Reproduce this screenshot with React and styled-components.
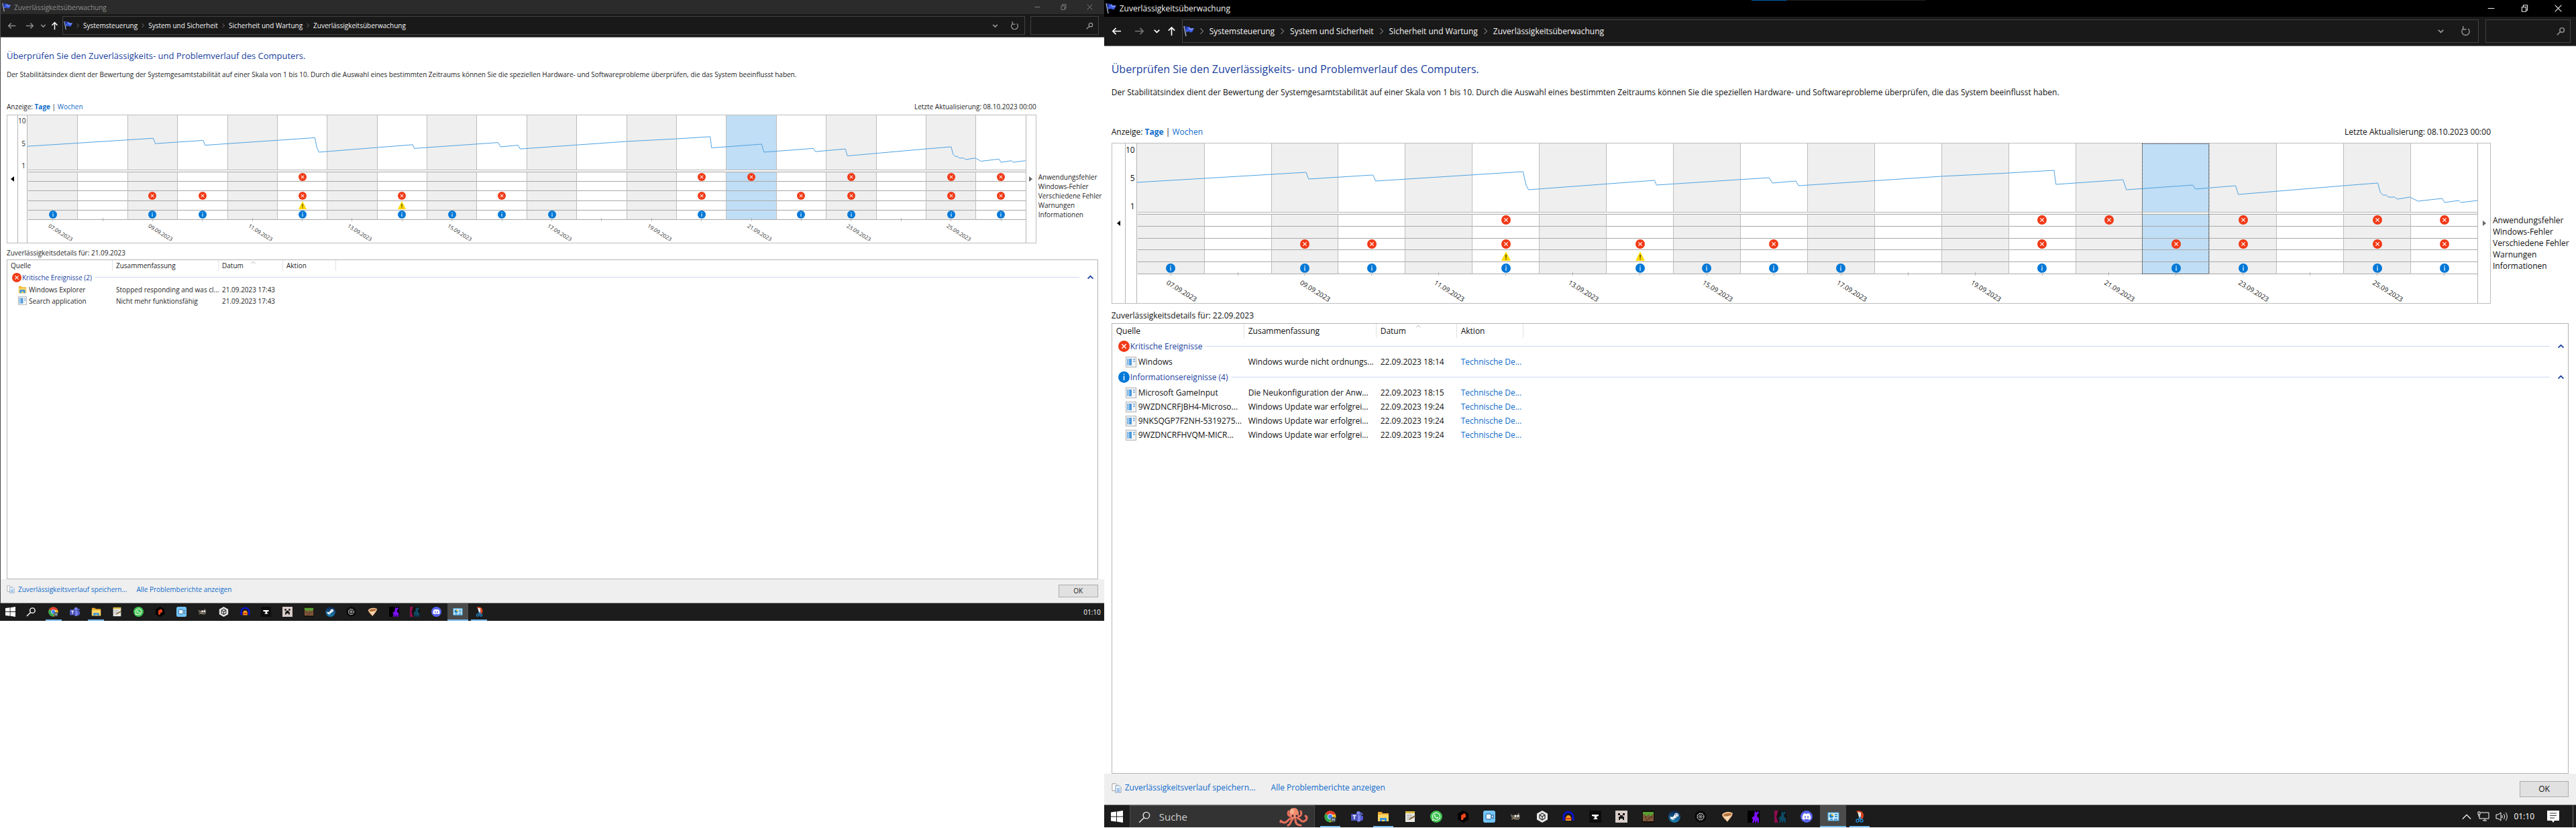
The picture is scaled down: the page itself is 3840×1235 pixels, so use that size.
import React from "react";
import styled, { createGlobalStyle, css, ThemeProvider } from "styled-components";
import { FaDiscord, FaSteamSymbol, FaWhatsapp } from "react-icons/fa";

const GlobalStyle = createGlobalStyle`
  * {
    box-sizing: border-box;
  }
  body {
    margin: 0;
    background: #fff;
    font-family: "Open Sans", "Noto Sans", sans-serif;
  }
  button, input {
    font: inherit;
    color: inherit;
    margin: 0;
    padding: 0;
    border: 0;
    background: none;
  }
  a {
    text-decoration: none;
  }
  svg {
    display: block;
    flex: none;
  }
`;

// The two monitors have different pixel densities
const small = {
  text: "#262626",
  titleColor: "#8c8c8c",
  titleBg: "#2b2b2b",
  navMuted: "#8c8c8c",
  navStrong: "#8c8c8c",
  font: 10,
  line: 14,
  headingFont: 13,
  headingLine: 18,
  titleHeight: 21,
  controlWidth: 39,
  controlIcon: 9,
  appIcon: 14,
  navHeight: 35,
  navPadY: 3,
  navWidths: [30, 24, 16, 18],
  navIcon: 13,
  crumbGap: 3,
  chevron: 8,
  searchWidth: 102,
  navGap: 8,
  toolWidth: 29,
  side: 9,
  top: 18,
  gapHeading: 12,
  gapIntro: 34,
  gapChart: 5,
  gapDetails: 7,
  gapList: 3,
  legend: 92,
  legendTop: 86,
  legendLine: 14,
  scroller: 15,
  axis: 15,
  plot: 82,
  bands: 72,
  dates: 34,
  dateFont: 8,
  dateTop: 4,
  eventIcon: 12,
  cols: [157, 158, 96, 79],
  cellPad: 5,
  head: 16,
  group: 19,
  row: 17,
  groupIcon: 14,
  itemPad: 17,
  groupPad: 7,
  footer: 36,
  okWidth: 59,
  okHeight: 19,
  footerGap: 14,
  taskbar: 26,
  start: 31,
  apps: 666,
  appsGap: 2,
  taskIcon: 15,
  underline: 24,
};

const large = {
  text: "#111",
  titleColor: "#f2f2f2",
  titleBg: "#000",
  navMuted: "#777",
  navStrong: "#fff",
  font: 12,
  line: 18,
  headingFont: 16,
  headingLine: 22,
  titleHeight: 25,
  controlWidth: 50,
  controlIcon: 11,
  appIcon: 17,
  navHeight: 44,
  navPadY: 4,
  navWidths: [36, 32, 20, 24],
  navIcon: 15,
  crumbGap: 5,
  chevron: 11,
  searchWidth: 127,
  navGap: 10,
  toolWidth: 37,
  side: 11,
  top: 23,
  gapHeading: 15,
  gapIntro: 41,
  gapChart: 7,
  gapDetails: 9,
  gapList: 2,
  legend: 116,
  legendTop: 107,
  legendLine: 17,
  scroller: 19,
  axis: 18,
  plot: 103,
  bands: 90,
  dates: 43,
  dateFont: 10,
  dateTop: 6,
  eventIcon: 14,
  cols: [197, 197, 120, 99],
  cellPad: 6,
  head: 21,
  group: 25,
  row: 21,
  groupIcon: 17,
  itemPad: 21,
  groupPad: 9,
  footer: 47,
  okWidth: 73,
  okHeight: 24,
  footerGap: 23,
  taskbar: 33,
  start: 38,
  apps: 828,
  appsGap: 4,
  taskIcon: 18,
  underline: 30,
};

const px = (key) => (p) => `${p.theme[key]}px`;

/* ---------- layout ---------- */

const Screens = styled.div`
  display: grid;
  grid-template-columns: 3fr 4fr;
  align-items: start;
`;

const Desktop = styled.section`
  display: flex;
  flex-direction: column;
  min-width: 0;
  aspect-ratio: 16 / 9;
  color: ${(p) => p.theme.text};
  font-size: ${px("font")};
  line-height: ${px("line")};
  white-space: nowrap;
`;

const Window = styled.main`
  flex: 1;
  min-height: 0;
  display: flex;
  flex-direction: column;
  background: #fff;
  border-left: ${(p) => (p.$edge ? "1px solid #4a4a4a" : "0")};
`;

const TitleBar = styled.header`
  position: relative;
  display: flex;
  align-items: center;
  height: ${px("titleHeight")};
  padding: 0 2px;
  gap: 4px;
  background: ${(p) => p.theme.titleBg};
  color: ${(p) => p.theme.titleColor};
`;

const Title = styled.span`
  flex: 1;
`;

const Progress = styled.div`
  position: absolute;
  top: 0;
  left: 44%;
  width: 259px;
  height: 1px;
  background: #1e1e1e;
  &::before {
    content: "";
    display: block;
    width: 52px;
    height: 1px;
    background: #0063b1;
  }
`;

const Controls = styled.div`
  display: flex;
  align-self: stretch;
`;

const IconButton = styled.button`
  display: flex;
  align-items: center;
  justify-content: center;
  width: ${(p) => p.$width}px;
  color: ${(p) => p.$color || "inherit"};
`;

const NavBar = styled.nav`
  display: flex;
  height: ${px("navHeight")};
  padding: ${px("navPadY")} 8px ${px("navPadY")} 1px;
  background: #191919;
  border-bottom: 1px solid #777;
  color: #f2f2f2;
`;

const Address = styled.div`
  flex: 1;
  display: flex;
  align-items: center;
  gap: ${px("crumbGap")};
  margin: 0 ${px("navGap")} 0 3px;
  padding-left: 1px;
  border: 1px solid #424242;
`;

const Crumb = styled.a`
  color: #f5f5f5;
  padding: 0 1px;
`;

const AddressTools = styled.div`
  display: flex;
  align-self: stretch;
  margin-left: auto;
`;

const SearchField = styled.label`
  display: flex;
  align-items: center;
  width: ${px("searchWidth")};
  padding-right: 7px;
  border: 1px solid #424242;
  color: #999;
  input {
    flex: 1;
    min-width: 0;
    outline: 0;
  }
`;

const Content = styled.div`
  flex: 1;
  min-height: 0;
  display: flex;
  flex-direction: column;
  padding: ${px("top")} ${px("side")} 0;
`;

const Heading = styled.h1`
  margin: 0 0 ${px("gapHeading")};
  color: #1a3f9f;
  font-size: ${px("headingFont")};
  line-height: ${px("headingLine")};
  font-weight: 400;
`;

const Intro = styled.p`
  margin: 0 0 ${px("gapIntro")};
`;

const ViewBar = styled.div`
  display: flex;
  justify-content: space-between;
  padding-right: ${px("legend")};
  margin-bottom: ${px("gapChart")};
`;

const TextLink = styled.a`
  color: #0f6ccb;
  font-weight: ${(p) => (p.$active ? 700 : 400)};
`;

/* ---------- chart ---------- */

const ChartRow = styled.div`
  display: flex;
`;

const ChartBox = styled.div`
  flex: 1;
  display: flex;
  border: 1px solid #bdbdbd;
`;

const Scroller = styled.button`
  width: ${px("scroller")};
  display: flex;
  align-items: center;
  justify-content: center;
  color: ${(p) => (p.$next ? "#666" : "#000")};
  border-left: ${(p) => (p.$next ? "1px solid #b5b5b5" : "0")};
`;

const Axis = styled.div`
  width: ${px("axis")};
  border: solid #b5b5b5;
  border-width: 0 1px;
`;

const AxisScale = styled.div`
  height: ${px("plot")};
  padding: 1px 2px 0 0;
  display: flex;
  flex-direction: column;
  justify-content: space-between;
  text-align: right;
`;

const Days = styled.div`
  position: relative;
  flex: 1;
  display: grid;
  grid-template-columns: repeat(20, 1fr);
`;

const DayButton = styled.button`
  display: block;
  width: 100%;
  text-align: inherit;
  outline: ${(p) => (p.$focused ? "1px dotted #333" : "0")};
  outline-offset: -1px;
`;

const dayFill = css`
  background: ${(p) => (p.$selected ? "#c0def5" : p.$odd ? "#fff" : "#efefef")};
  border-left: 1px solid ${(p) => (p.$first ? "transparent" : "#bdbdbd")};
`;

const PlotCell = styled.div`
  height: ${px("plot")};
  border-bottom: 1px solid #b5b5b5;
  ${dayFill}
`;

const Bands = styled.div`
  display: grid;
  grid-template-rows: repeat(5, 1fr);
  height: ${px("bands")};
  margin-top: 2px;
  border-top: 1px solid #a3a3a3;
  ${dayFill}
`;

const Band = styled.div`
  display: flex;
  align-items: center;
  justify-content: center;
  border-bottom: 1px solid #a9a9a9;
`;

const DateCell = styled.div`
  position: relative;
  height: ${px("dates")};
  padding: ${px("dateTop")} 0 0 calc(50% - 5px);
  font-size: ${px("dateFont")};
  line-height: ${px("dateFont")};
  &::before {
    content: "";
    position: absolute;
    left: 50%;
    top: -3px;
    height: 5px;
    border-left: 1px solid #b5b5b5;
  }
  span {
    display: inline-block;
    transform: rotate(32deg);
    transform-origin: 0 50%;
  }
`;

const LineSvg = styled.svg`
  position: absolute;
  left: 0;
  top: 0;
  width: 100%;
  height: ${px("plot")};
  pointer-events: none;
`;

const Legend = styled.ul`
  width: ${px("legend")};
  margin: ${px("legendTop")} 0 0;
  padding: 0 0 0 3px;
  list-style: none;
  line-height: ${px("legendLine")};
`;

/* ---------- details list ---------- */

const DetailsTitle = styled.h2`
  margin: ${px("gapDetails")} 0 ${px("gapList")};
  font: inherit;
`;

const ListBox = styled.div`
  flex: 1;
  min-height: 0;
  border: 1px solid #b5b5b5;
`;

const Table = styled.table`
  width: 100%;
  table-layout: fixed;
  border-collapse: separate;
  border-spacing: 0;
  th,
  td {
    padding: 0 0 0 ${px("cellPad")};
    font-weight: 400;
    text-align: left;
    overflow: hidden;
  }
  td {
    height: ${px("row")};
  }
`;

const HeadCell = styled.th`
  position: relative;
  height: ${px("head")};
  border-right: ${(p) => (p.$last ? "0" : "1px solid #e2e2e2")};
  svg {
    position: absolute;
    left: 50%;
    top: 0;
  }
`;

const GroupHead = styled.div`
  display: flex;
  align-items: center;
  gap: 1px;
  height: ${px("group")};
  padding: 0 6px 0 ${(p) => p.theme.groupPad - p.theme.cellPad}px;
  color: #1a3f9f;
  hr {
    flex: 1;
    height: 1px;
    margin: 0 11px 0 4px;
    border: 0;
    background: #cdd7ee;
  }
`;

const Source = styled.div`
  display: flex;
  align-items: center;
  gap: 3px;
  padding-left: ${(p) => p.theme.itemPad - p.theme.cellPad - 1}px;
`;

const Footer = styled.footer`
  display: flex;
  align-items: center;
  gap: ${px("footerGap")};
  height: ${px("footer")};
  padding: 0 ${px("side")};
  background: #efefef;
  border-bottom: 1px solid #8a8a8a;
  a {
    display: flex;
    align-items: center;
    gap: 5px;
    margin-bottom: 4px;
  }
`;

const OkButton = styled.button`
  width: ${px("okWidth")};
  height: ${px("okHeight")};
  margin-left: auto;
  border: 1px solid #adadad;
  background: #e1e1e1;
`;

/* ---------- taskbar ---------- */

const Taskbar = styled.footer`
  display: flex;
  height: ${px("taskbar")};
  background: #1c1c1c;
  color: #fff;
`;

const TaskSearch = styled.label`
  display: flex;
  align-items: center;
  width: 276px;
  padding: 0 7px 0 12px;
  gap: 12px;
  border: 1px solid #4a4a4a;
  border-bottom: 0;
  background: #333;
  input {
    flex: 1;
    min-width: 0;
    outline: 0;
    font-size: 15px;
  }
  input::placeholder {
    color: #cfcfcf;
    opacity: 1;
  }
`;

const Apps = styled.div`
  display: grid;
  grid-template-columns: repeat(21, 1fr);
  width: ${px("apps")};
  margin-left: ${px("appsGap")};
`;

const TaskButton = styled.button`
  position: relative;
  display: flex;
  align-items: center;
  justify-content: center;
  background: ${(p) => (p.$active ? "#4b4b4b" : "none")};
  &::after {
    content: "";
    display: ${(p) => (p.$open || p.$active ? "block" : "none")};
    position: absolute;
    bottom: 0;
    width: ${(p) => (p.$active ? "100%" : `${p.theme.underline}px`)};
    height: 2px;
    background: #76b9ed;
  }
`;

const Tray = styled.div`
  display: flex;
  align-items: center;
  gap: 9px;
  margin-left: auto;
  padding-right: ${(p) => (p.$full ? 4 : 5)}px;
`;

const TrayEnd = styled.div`
  align-self: stretch;
  display: flex;
  align-items: center;
  padding: 0 20px 0 10px;
  border-right: 1px solid #6b6b6b;
`;

/* ---------- icons ---------- */

const Flag = ({ size }) => (
  <svg width={size} height={size} viewBox="0 0 17 17">
    <path d="M1 1l3 15" stroke="#aab4c4" strokeWidth="1.4" />
    <path d="M2 2c3-2 4 1 7 0l1 2c2 1 4 0 6 0l-3 6c-2 1-4-1-5-1-2 0-3 1-4 1z" fill="#3c5be0" />
    <path d="M9 2l1 2c2 1 4 0 6 0l-3 3c-2 0-4-1-5-2z" fill="#7b97ff" />
    <path d="M2 2c2-1 3 0 4 0L5 6 3 7z" fill="#20339a" />
  </svg>
);

const paths = {
  back: "M15 8H2M7 3L2 8l5 5",
  forward: "M1 8h13M9 3l5 5-5 5",
  down: "M4 6l4 4 4-4",
  up: "M8 15V2M3 7l5-5 5 5",
  right: "M5 2l6 6-6 6",
  caret: "M1 12l7-7 7 7",
  minimize: "M1 8h14",
  close: "M1 1l14 14M15 1L1 15",
  restore: "M2 5h9v10H2zM5 5V1h9v11h-3",
  refresh: "M4 4a6 6 0 1 0 8 0M4 0v5h5",
  search: "M14 6a4 4 0 1 1-8 0 4 4 0 0 1 8 0zM7 9l-6 6",
};

const Stroke = ({ name, size, width = 1.5, color }) => (
  <svg width={size} height={size} viewBox="0 0 16 16" fill="none" stroke={color || "currentColor"} strokeWidth={width}>
    <path d={paths[name]} />
  </svg>
);

const ErrorIcon = ({ size }) => (
  <svg width={size} height={size} viewBox="0 0 16 16">
    <circle cx="8" cy="8" r="8" fill="#f03a17" />
    <path d="M5 5l6 6M11 5l-6 6" stroke="#fff" strokeWidth="1.4" />
  </svg>
);

const InfoIcon = ({ size }) => (
  <svg width={size} height={size} viewBox="0 0 16 16">
    <circle cx="8" cy="8" r="8" fill="#0078d7" />
    <path d="M8 3.4v1.6M8 6.4v6" stroke="#fff" strokeWidth="1.4" />
  </svg>
);

const WarningIcon = ({ size }) => (
  <svg width={size} height={size} viewBox="0 0 16 16">
    <path d="M8 0l8 16H0z" fill="#ffda00" />
    <path d="M8 5.5v5.5M8 12.4v1.6" stroke="#222" strokeWidth="1.4" />
  </svg>
);

const eventIcons = { error: ErrorIcon, info: InfoIcon, warning: WarningIcon };

const ProgramIcon = ({ size }) => (
  <svg width={size} height={size} viewBox="0 0 16 16">
    <rect x="0.5" y="0.5" width="15" height="15" fill="#f4f4f4" stroke="#b0b0b0" />
    <rect x="2" y="3" width="7" height="10" fill="#4a98dc" />
    <path d="M4 3v10" stroke="#9cc9ee" strokeWidth="3" />
    <path d="M11 4h3M11 7h3" stroke="#6aa6dc" strokeWidth="1.5" />
  </svg>
);

const FolderIcon = ({ size }) => (
  <svg width={size} height={size} viewBox="0 0 16 16">
    <path d="M1 2h5l1 2h8v11H1z" fill="#f0b93a" />
    <path d="M1 6h14v9H1z" fill="#ffd766" />
    <path d="M3 15V9h10v6h-3v-3H6v3z" fill="#3a93dd" />
  </svg>
);

const CopyIcon = ({ size }) => (
  <svg width={size} height={size} viewBox="0 0 16 16">
    <path d="M1 1h6l2 2v9H1z" fill="#fff" stroke="#999" />
    <path d="M6 4h6l3 3v8H6z" fill="#eaf3fc" stroke="#8a9db5" />
    <path d="M8 9h5M8 11h5M8 13h5" stroke="#5d9bdc" />
  </svg>
);

const Pic = ({ size, children }) => (
  <svg width={size} height={size} viewBox="0 0 18 18">
    {children}
  </svg>
);

const Round = styled.span`
  display: flex;
  align-items: center;
  justify-content: center;
  width: ${px("taskIcon")};
  height: ${px("taskIcon")};
  border-radius: 50%;
  background: ${(p) => p.$bg};
  font-size: ${(p) => p.theme.taskIcon - 4}px;
  color: #fff;
`;

const taskApps = [
  {
    name: "Chrome",
    open: true,
    draw: (
      <>
        <circle cx="9" cy="9" r="8.5" fill="#fbc116" />
        <path d="M9 9L1.6 4.8A8.5 8.5 0 0 1 16.4 4.8L17 6H9z" fill="#e33b2e" />
        <path d="M9 9L1.6 4.8A8.5 8.5 0 0 0 8 17.4L12 10z" fill="#2da94f" />
        <circle cx="9" cy="9" r="4" fill="#fff" />
        <circle cx="9" cy="9" r="3.2" fill="#4285f4" />
        <circle cx="13.5" cy="13.5" r="4" fill="#47545c" />
        <path d="M12 11.5v4M15 11.5v4M12 13.5h3" stroke="#b8c7cf" />
      </>
    ),
  },
  {
    name: "Teams",
    draw: (
      <>
        <circle cx="11" cy="4" r="3" fill="#7b83eb" />
        <circle cx="15.5" cy="5" r="2" fill="#5059c9" />
        <path d="M9 7h6v7a4 4 0 0 1-6 2z" fill="#7b83eb" />
        <path d="M14 8h4v5a3 3 0 0 1-4 2z" fill="#5059c9" />
        <rect x="0" y="5" width="10" height="10" rx="1" fill="#4b53bc" />
        <path d="M2.5 7.5h5M5 7.5V13" stroke="#fff" strokeWidth="1.4" />
      </>
    ),
  },
  {
    name: "Explorer",
    open: true,
    draw: (
      <>
        <path d="M1 2h6l1 2h9v12H1z" fill="#e8a92c" />
        <path d="M1 6h16v10H1z" fill="#ffd766" />
        <path d="M4 16v-5h10v5h-3v-2H7v2z" fill="#3a93dd" />
      </>
    ),
  },
  {
    name: "Editor",
    draw: (
      <>
        <path d="M2 2h14v15H2z" fill="#e9e9e4" />
        <path d="M2 1h14v3H2z" fill="#d9b93c" />
        <path d="M4 7h8M4 10h8M4 13h6" stroke="#9a9a9a" />
        <path d="M16 7l-8 5-1 2 3-1 7-4z" fill="#8a6a40" />
      </>
    ),
  },
  { name: "WhatsApp", round: "#3fc351", glyph: <FaWhatsapp /> },
  {
    name: "Recorder",
    draw: (
      <>
        <path d="M9 0l8 4.5v9L9 18l-8-4.5v-9z" fill="#000" />
        <path d="M6 14V7l5-3 2 2v4l-3 1-1 3z" fill="#f4431c" />
      </>
    ),
  },
  {
    name: "Kamera",
    draw: (
      <>
        <rect x="0" y="0" width="18" height="18" rx="3" fill="#74c5fb" />
        <rect x="4" y="5" width="8" height="8" rx="2" fill="#e4f4ff" stroke="#1d5c92" />
        <path d="M12 8l3-2v6l-3-2z" fill="#e4f4ff" stroke="#1d5c92" />
      </>
    ),
  },
  {
    name: "GIMP",
    draw: (
      <>
        <path d="M2 5l3 2c3-1 5 0 7-1l2-3 2 5-1 5c-3 2-7 1-9-1C3 11 2 9 2 5z" fill="#6d675c" />
        <circle cx="9" cy="8" r="1.5" fill="#fff" />
        <circle cx="13" cy="8" r="1.5" fill="#fff" />
        <path d="M3 13l6-2" stroke="#c4a478" />
      </>
    ),
  },
  {
    name: "Unity Hub",
    draw: (
      <>
        <path d="M9 0l8 4.5v9L9 18l-8-4.5v-9z" fill="#e8e8e8" />
        <path d="M9 4l4 2.5v5L9 14l-4-2.5v-5zM9 9v5M9 9L5 6.500M9 9l4-2.5" fill="none" stroke="#333" strokeWidth="1.3" />
      </>
    ),
  },
  {
    name: "Audacity",
    draw: (
      <>
        <path d="M2 15V9a7 7 0 0 1 14 0v6" fill="none" stroke="#0a12c8" strokeWidth="3" />
        <path d="M5 12a4 5 0 0 1 8 0v3H5z" fill="#f7a01c" />
        <path d="M4 12h10" stroke="#d3311f" strokeWidth="2" />
      </>
    ),
  },
  {
    name: "Anvil",
    draw: (
      <>
        <rect width="18" height="18" fill="#0c0c0c" />
        <path d="M4 6h10v2l-3 1v2l2 2H6l2-2V9L4 8z" fill="#fff" />
      </>
    ),
  },
  {
    name: "Launcher",
    draw: (
      <>
        <rect width="18" height="18" fill="#d9cdc9" />
        <path d="M4 4h3v3H4zM11 4h3v3h-3zM7 7h4v2h2v5h-2v-2H7v2H5V9h2z" fill="#161616" />
      </>
    ),
  },
  {
    name: "Minecraft",
    draw: (
      <>
        <rect width="18" height="18" fill="#120d08" />
        <path d="M1 2h16v14H1z" fill="#80573a" />
        <path d="M1 2h16v4h-3v2h-3V6H8v2H5V6H1z" fill="#56a032" />
        <path d="M4 10h2M9 12h2M13 10h2M6 14h2M11 9h1" stroke="#4d3322" strokeWidth="2" />
      </>
    ),
  },
  { name: "Steam", round: "linear-gradient(#10234f, #1784b8)", glyph: <FaSteamSymbol /> },
  {
    name: "Wheel",
    draw: (
      <>
        <circle cx="9" cy="9" r="8.5" fill="#050505" />
        <circle cx="9" cy="9" r="5" fill="none" stroke="#bbb" strokeWidth="1.3" strokeDasharray="3 1" />
        <path d="M9 4v10M4 9h10M6 6l6 6M12 6l-6 6" stroke="#999" />
      </>
    ),
  },
  {
    name: "Shell",
    draw: (
      <>
        <path d="M1 6c3-5 13-5 16-2-1 6-6 9-8 13C6 13 2 11 1 6z" fill="#f4c391" />
        <path d="M3 6c4-2 9-3 13-1-3 3-8 4-12 3z" fill="#b0703d" />
        <path d="M6 11l6-2M8 14l3-2" stroke="#fff" />
      </>
    ),
  },
  {
    name: "Wolf",
    draw: (
      <>
        <rect width="18" height="18" fill="#000" />
        <path d="M11 0l2 3 3-2 1 2-3 4 1 3 2 1v7h-2l-1-4-1 4h-2v-4l-2 4H7l1-5-2-2 4-3z" fill="#7a10f5" />
      </>
    ),
  },
  {
    name: "Wolf 2",
    draw: (
      <>
        <rect width="18" height="18" fill="#111" />
        <path d="M0 0h6L3 9l3 9H0z" fill="#8a0e4c" />
        <path d="M11 0l2 3 3-2 1 2-3 4 1 3 2 1v7h-2l-1-4-1 4h-2v-4l-2 4H7l1-5-2-2 4-3z" fill="#0e4a63" />
      </>
    ),
  },
  { name: "Discord", round: "#5865f2", glyph: <FaDiscord /> },
  {
    name: "Systemsteuerung",
    active: true,
    draw: (
      <>
        <rect x="1" y="3" width="16" height="12" fill="#d2ecfa" stroke="#3aa0dc" />
        <circle cx="6" cy="8" r="3" fill="#1583cc" />
        <path d="M6 8V5a3 3 0 0 1 3 3z" fill="#f4b52b" />
        <path d="M11 6h4M11 9h4M4 13h4M10 13h5" stroke="#1583cc" strokeWidth="1.5" />
      </>
    ),
  },
  {
    name: "Snipping Tool",
    open: true,
    draw: (
      <>
        <path d="M4 1c6-2 11 1 11 6s-2 6-5 6l1-5z" fill="#d9431e" />
        <path d="M6 2l5 1v7l-2 3z" fill="#e8e8e8" />
        <circle cx="6" cy="15" r="2" fill="none" stroke="#2386d4" strokeWidth="1.5" />
        <circle cx="12" cy="15" r="2" fill="none" stroke="#2386d4" strokeWidth="1.5" />
        <path d="M7 13l3-3 1 3" stroke="#2386d4" strokeWidth="1.5" fill="none" />
      </>
    ),
  },
];

const Octopus = () => (
  <svg width="46" height="29" viewBox="0 0 46 29">
    <g fill="none" stroke="#e8705c" strokeWidth="3" strokeLinecap="round">
      <path d="M20 16C12 18 13 24 8 23S3 18 3 22" />
      <path d="M21 18c-4 2-2 8-7 9" />
      <path d="M25 18c0 6 3 9 8 9" />
      <path d="M28 16c6 2 5 7 10 5s5-7 2-8" />
      <path d="M28 13c5 2 7-3 5-7" />
      <path d="M18 13c-4 0-5-4-3-7" />
    </g>
    <ellipse cx="23" cy="9" rx="7" ry="8" fill="#f08a6c" />
    <ellipse cx="20" cy="6" rx="3" ry="4" fill="#f9b08c" />
    <circle cx="21" cy="13" r="1.5" fill="#2b1a3a" />
    <circle cx="27" cy="13" r="1.5" fill="#2b1a3a" />
  </svg>
);

/* ---------- data ---------- */

const bands = [
  { label: "Anwendungsfehler", icon: "error", days: [5, 13, 14, 16, 18, 19] },
  { label: "Windows-Fehler", icon: "error", days: [] },
  { label: "Verschiedene Fehler", icon: "error", days: [2, 3, 5, 7, 9, 13, 15, 16, 18, 19] },
  { label: "Warnungen", icon: "warning", days: [5, 7] },
  { label: "Informationen", icon: "info", days: [0, 2, 3, 5, 7, 8, 9, 10, 13, 15, 16, 18, 19] },
];

const days = Array.from({ length: 20 }, (_, i) => `${String(i + 7).padStart(2, "0")}.09.2023`);

const stability =
  "0,58 252,43 256,53 352,47 356,56 576,42 580,61 584,69 772,55 775,62 943,51 948,59 983,56 987,63 " +
  "1200,49 1301,44 1368,40 1371,61 1471,54 1476,69 1575,62 1579,68 1639,63 1643,76 1800,63 1851,59 " +
  "1855,73 1859,77 1864,77 1867,80 1876,80 1880,83 1899,80 1911,86 1947,82 1951,88 1972,85 1975,88 2000,85";

const leftGroups = [
  {
    title: "Kritische Ereignisse (2)",
    icon: "error",
    items: [
      { folder: true, source: "Windows Explorer", summary: "Stopped responding and was cl...", date: "21.09.2023 17:43" },
      { source: "Search application", summary: "Nicht mehr funktionsfähig", date: "21.09.2023 17:43" },
    ],
  },
];

const details = "Technische De...";
const rightGroups = [
  {
    title: "Kritische Ereignisse",
    icon: "error",
    items: [
      { source: "Windows", summary: "Windows wurde nicht ordnungs...", date: "22.09.2023 18:14", action: details },
    ],
  },
  {
    title: "Informationsereignisse (4)",
    icon: "info",
    items: [
      { source: "Microsoft GameInput", summary: "Die Neukonfiguration der Anw...", date: "22.09.2023 18:15", action: details },
      { source: "9WZDNCRFJBH4-Microso...", summary: "Windows Update war erfolgrei...", date: "22.09.2023 19:24", action: details },
      { source: "9NKSQGP7F2NH-5319275...", summary: "Windows Update war erfolgrei...", date: "22.09.2023 19:24", action: details },
      { source: "9WZDNCRFHVQM-MICR...", summary: "Windows Update war erfolgrei...", date: "22.09.2023 19:24", action: details },
    ],
  },
];

const crumbs = ["Systemsteuerung", "System und Sicherheit", "Sicherheit und Wartung", "Zuverlässigkeitsüberwachung"];

/* ---------- components ---------- */

const Chrome = ({ t, focused }) => (
  <>
    <TitleBar>
      {focused && <Progress />}
      <Flag size={t.appIcon} />
      <Title>Zuverlässigkeitsüberwachung</Title>
      <Controls>
        {["minimize", "restore", "close"].map((name) => (
          <IconButton key={name} aria-label={name} $width={t.controlWidth}>
            <Stroke name={name} size={t.controlIcon} />
          </IconButton>
        ))}
      </Controls>
    </TitleBar>
    <NavBar>
      {["back", "forward", "down", "up"].map((name, i) => (
        <IconButton
          key={name}
          aria-label={name}
          $width={t.navWidths[i]}
          $color={name === "up" ? "#fff" : name === "forward" ? t.navMuted : t.navStrong}
        >
          <Stroke name={name} size={t.navIcon} width={1.8} />
        </IconButton>
      ))}
      <Address>
        <Flag size={t.appIcon} />
        {crumbs.map((crumb) => (
          <React.Fragment key={crumb}>
            <Stroke name="right" size={t.chevron} color="#8a8a8a" />
            <Crumb href="#">{crumb}</Crumb>
          </React.Fragment>
        ))}
        <AddressTools>
          <IconButton aria-label="Verlauf" $width={t.toolWidth} $color="#999">
            <Stroke name="down" size={t.navIcon} width={1.8} />
          </IconButton>
          <IconButton aria-label="Aktualisieren" $width={t.toolWidth} $color="#999">
            <Stroke name="refresh" size={t.navIcon} />
          </IconButton>
        </AddressTools>
      </Address>
      <SearchField>
        <input type="text" aria-label="Suchen" />
        <Stroke name="search" size={t.controlIcon + 2} width={1.8} />
      </SearchField>
    </NavBar>
  </>
);

const Arrow = ({ next }) => (
  <svg width="5" height="8" viewBox="0 0 5 8" fill="currentColor">
    <path d={next ? "M0 0l5 4-5 4z" : "M5 0L0 4l5 4z"} />
  </svg>
);

const Chart = ({ t, selected, focused }) => (
  <ChartRow>
    <ChartBox>
      <Scroller aria-label="Zurück">
        <Arrow />
      </Scroller>
      <Axis>
        <AxisScale>
          <span>10</span>
          <span>5</span>
          <span>1</span>
        </AxisScale>
      </Axis>
      <Days>
        {days.map((day, i) => (
          <div key={day}>
            <DayButton aria-label={day} $focused={focused && i === selected}>
              <PlotCell $odd={i % 2} $selected={i === selected} $first={i === 0} />
              <Bands $odd={i % 2} $selected={i === selected} $first={i === 0}>
                {bands.map((band) => {
                  const Icon = eventIcons[band.icon];
                  return <Band key={band.label}>{band.days.includes(i) && <Icon size={t.eventIcon} />}</Band>;
                })}
              </Bands>
            </DayButton>
            <DateCell>{i % 2 === 0 && <span>{day}</span>}</DateCell>
          </div>
        ))}
        <LineSvg viewBox="0 0 2000 103" preserveAspectRatio="none">
          <polyline points={stability} fill="none" stroke="#4fa3e3" strokeWidth="1" vectorEffect="non-scaling-stroke" />
        </LineSvg>
      </Days>
      <Scroller $next aria-label="Weiter">
        <Arrow next />
      </Scroller>
    </ChartBox>
    <Legend>
      {bands.map((band) => (
        <li key={band.label}>{band.label}</li>
      ))}
    </Legend>
  </ChartRow>
);

const Details = ({ t, groups }) => (
  <ListBox>
    <Table>
      <colgroup>
        {t.cols.map((width, i) => (
          <col key={i} width={width} />
        ))}
        <col />
      </colgroup>
      <thead>
        <tr>
          <HeadCell>Quelle</HeadCell>
          <HeadCell>Zusammenfassung</HeadCell>
          <HeadCell>
            Datum
            <Stroke name="caret" size={7} color="#888" />
          </HeadCell>
          <HeadCell>Aktion</HeadCell>
          <HeadCell $last />
        </tr>
      </thead>
      <tbody>
        {groups.map((group) => {
          const Icon = eventIcons[group.icon];
          return (
            <React.Fragment key={group.title}>
              <tr>
                <td colSpan={5}>
                  <GroupHead>
                    <Icon size={t.groupIcon} />
                    <span>{group.title}</span>
                    <hr />
                    <Stroke name="caret" size={9} width={3} color="#1a3f9f" />
                  </GroupHead>
                </td>
              </tr>
              {group.items.map((item) => (
                <tr key={item.source}>
                  <td>
                    <Source>
                      {item.folder ? <FolderIcon size={t.groupIcon - 1} /> : <ProgramIcon size={t.groupIcon - 1} />}
                      {item.source}
                    </Source>
                  </td>
                  <td>{item.summary}</td>
                  <td>{item.date}</td>
                  <td>{item.action && <TextLink href="#">{item.action}</TextLink>}</td>
                  <td />
                </tr>
              ))}
            </React.Fragment>
          );
        })}
      </tbody>
    </Table>
  </ListBox>
);

const TaskbarRow = ({ t, full }) => (
  <Taskbar>
    <IconButton aria-label="Start" $width={t.start}>
      <Pic size={t.taskIcon}>
        <path d="M0 2.5l8-1v7H0zM9 1.4L18 0v8.500H9zM0 9.5h8v7l-8-1zM9 9.5h9V18l-9-1.4z" fill="#fff" />
      </Pic>
    </IconButton>
    {full ? (
      <TaskSearch>
        <Stroke name="search" size={19} width={1.2} color="#e8e8e8" />
        <input type="text" placeholder="Suche" aria-label="Suche" />
        <Octopus />
      </TaskSearch>
    ) : (
      <IconButton aria-label="Suche" $width={t.start}>
        <Stroke name="search" size={15} />
      </IconButton>
    )}
    <Apps>
      {taskApps.map((app) => (
        <TaskButton key={app.name} aria-label={app.name} $open={app.open} $active={app.active}>
          {app.round ? <Round $bg={app.round}>{app.glyph}</Round> : <Pic size={t.taskIcon}>{app.draw}</Pic>}
        </TaskButton>
      ))}
    </Apps>
    <Tray $full={full}>
      {full && (
        <>
          <Stroke name="caret" size={14} width={1.4} />
          <svg width="18" height="16" viewBox="0 0 18 16" fill="none" stroke="#fff">
            <path d="M5 2h12v9H3V6M8 14h6M11 11v3M1 1h3v4H1zM2 5v3" />
          </svg>
          <svg width="18" height="16" viewBox="0 0 18 16" fill="none" stroke="#fff">
            <path d="M1 5h3l4-3v12l-4-3H1zM10 6v4M12 4c2 2 2 6 0 8M15 2c3 3 3 9 0 12" />
          </svg>
        </>
      )}
      <time>01:10</time>
      {full && (
        <TrayEnd>
          <svg width="18" height="18" viewBox="0 0 18 18">
            <path d="M0 0h18v15h-7l-2 3-2-3H0z" fill="#fff" />
            <path d="M4 4h10M4 7.5h10M4 11h7" stroke="#333" />
          </svg>
        </TrayEnd>
      )}
    </Tray>
  </Taskbar>
);

const Monitor = ({ theme: t, date, selected, focused, groups }) => (
  <ThemeProvider theme={t}>
    <Desktop>
      <Window $edge={!focused}>
        <Chrome t={t} focused={focused} />
        <Content>
          <Heading>Überprüfen Sie den Zuverlässigkeits- und Problemverlauf des Computers.</Heading>
          <Intro>
            Der Stabilitätsindex dient der Bewertung der Systemgesamtstabilität auf einer Skala von 1 bis 10. Durch die
            Auswahl eines bestimmten Zeitraums können Sie die speziellen Hardware- und Softwareprobleme überprüfen, die
            das System beeinflusst haben.
          </Intro>
          <ViewBar>
            <span>
              Anzeige:{" "}
              <TextLink href="#" $active>
                Tage
              </TextLink>{" "}
              | <TextLink href="#">Wochen</TextLink>
            </span>
            <span>Letzte Aktualisierung: 08.10.2023 00:00</span>
          </ViewBar>
          <Chart t={t} selected={selected} focused={focused} />
          <DetailsTitle>Zuverlässigkeitsdetails für: {date}</DetailsTitle>
          <Details t={t} groups={groups} />
        </Content>
        <Footer>
          <TextLink href="#">
            <CopyIcon size={t.groupIcon - 2} />
            Zuverlässigkeitsverlauf speichern...
          </TextLink>
          <TextLink href="#">Alle Problemberichte anzeigen</TextLink>
          <OkButton>OK</OkButton>
        </Footer>
      </Window>
      <TaskbarRow t={t} full={focused} />
    </Desktop>
  </ThemeProvider>
);

const App = () => (
  <>
    <GlobalStyle />
    <Screens>
      <Monitor theme={small} date="21.09.2023" selected={14} groups={leftGroups} />
      <Monitor theme={large} date="22.09.2023" selected={15} groups={rightGroups} focused />
    </Screens>
  </>
);

export default App;
